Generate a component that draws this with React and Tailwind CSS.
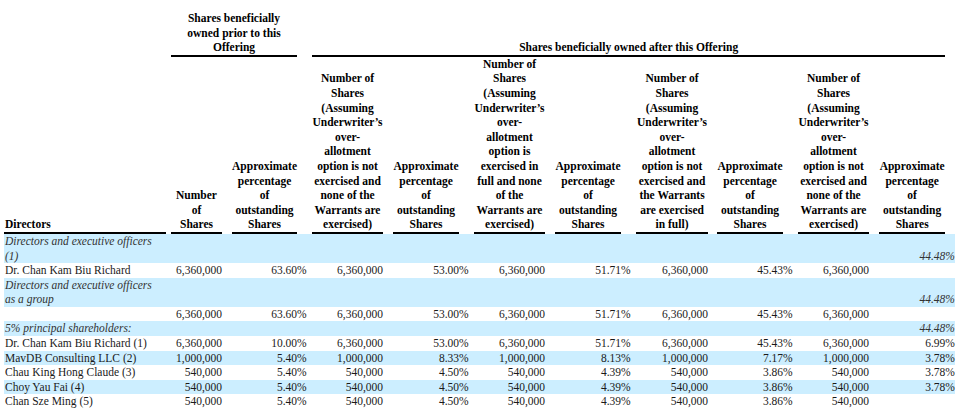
const shareCol = (a, b, c, d) => [
  "Number of",
  "Shares",
  "(Assuming",
  "Underwriter’s",
  "over-",
  "allotment",
  a,
  b,
  c,
  d,
];

const headers = [
  ["Number", "of", "Shares"],
  ["Approximate", "percentage", "of", "outstanding", "Shares"],
  [...shareCol("option is not", "exercised and", "none of the", "Warrants are"), "exercised)"],
  ["Approximate", "percentage", "of", "outstanding", "Shares"],
  [
    "Number of",
    "Shares",
    "(Assuming",
    "Underwriter’s",
    "over-",
    "allotment",
    "option is",
    "exercised in",
    "full and none",
    "of the",
    "Warrants are",
    "exercised)",
  ],
  ["Approximate", "percentage", "of", "outstanding", "Shares"],
  [...shareCol("option is not", "exercised and", "the Warrants", "are exercised"), "in full)"],
  ["Approximate", "percentage", "of", "outstanding", "Shares"],
  [...shareCol("option is not", "exercised and", "none of the", "Warrants are"), "exercised)"],
  ["Approximate", "percentage", "of", "outstanding", "Shares"],
];

const big = ["6,360,000", "63.60", "6,360,000", "53.00", "6,360,000", "51.71", "6,360,000", "45.43", "6,360,000", null];
const empty = [null, null, null, null, null, null, null, null, null, "44.48"];

const rows = [
  { name: ["Directors and executive officers", "(1)"], italic: true, blue: true, v: empty },
  { name: ["Dr. Chan Kam Biu Richard"], v: big },
  { name: ["Directors and executive officers", "as a group"], italic: true, blue: true, v: empty },
  { name: [""], v: big },
  { name: ["5% principal shareholders:"], italic: true, blue: true, v: empty },
  {
    name: ["Dr. Chan Kam Biu Richard (1)"],
    v: ["6,360,000", "10.00", "6,360,000", "53.00", "6,360,000", "51.71", "6,360,000", "45.43", "6,360,000", "6.99"],
  },
  {
    name: ["MavDB Consulting LLC (2)"],
    blue: true,
    v: ["1,000,000", "5.40", "1,000,000", "8.33", "1,000,000", "8.13", "1,000,000", "7.17", "1,000,000", "3.78"],
  },
  {
    name: ["Chau King Hong Claude (3)"],
    v: ["540,000", "5.40", "540,000", "4.50", "540,000", "4.39", "540,000", "3.86", "540,000", "3.78"],
  },
  {
    name: ["Choy Yau Fai (4)"],
    blue: true,
    v: ["540,000", "5.40", "540,000", "4.50", "540,000", "4.39", "540,000", "3.86", "540,000", "3.78"],
  },
  {
    name: ["Chan Sze Ming (5)"],
    v: ["540,000", "5.40", "540,000", "4.50", "540,000", "4.39", "540,000", "3.86", "540,000", null],
  },
];

const HeaderRow = () => {
  const cells = [
    <th key="dir" className="p-0 text-left align-bottom font-bold border-b-2 border-black pl-[1px]">
      Directors
    </th>,
    <th key="sp0" className="p-0" />,
  ];
  headers.forEach((lines, i) => {
    cells.push(
      <th key={`h${i}`} className="p-0 text-center align-bottom font-bold border-b-2 border-black">
        {lines.map((l, j) => (
          <div key={j} className="whitespace-nowrap">
            {l}
          </div>
        ))}
      </th>
    );
    if (i % 2 === 1) cells.push(<th key={`p${i}`} className="p-0" />);
    if (i < 9) cells.push(<th key={`s${i}`} className="p-0" />);
  });
  return <tr>{cells}</tr>;
};

const DataRow = ({ row }) => {
  const cells = [
    <td key="name" className="p-0 pl-[1px] align-bottom">
      {row.name.map((n, j) => (
        <div key={j} className="whitespace-nowrap">
          {n || "\u00a0"}
        </div>
      ))}
    </td>,
    <td key="sp0" className="p-0" />,
  ];
  row.v.forEach((val, i) => {
    cells.push(
      <td key={`v${i}`} className="p-0 text-right align-bottom whitespace-nowrap">
        {val}
      </td>
    );
    if (i % 2 === 1)
      cells.push(
        <td key={`p${i}`} className="p-0 text-left align-bottom whitespace-nowrap">
          {val ? "%" : null}
        </td>
      );
    if (i < 9) cells.push(<td key={`s${i}`} className="p-0" />);
  });
  return (
    <tr className={`${row.blue ? "bg-[#cceeff]" : "bg-white"} ${row.italic ? "italic text-[#333333]" : "text-[#1a1a1a]"}`}>
      {cells}
    </tr>
  );
};

export default function App() {
  return (
    <div className="min-h-screen bg-white pl-[4px] pt-[11px] font-['Liberation_Serif',serif] text-[11.5px] leading-[14.6px] text-black">
      <table className="table-fixed border-separate border-spacing-0 w-[951px]">
        <colgroup>
          <col className="w-[162px]" />
          <col className="w-[5px]" />
          <col className="w-[51px]" />
          <col className="w-[10px]" />
          <col className="w-[65px]" />
          <col className="w-[10px]" />
          <col className="w-[5px]" />
          <col className="w-[71px]" />
          <col className="w-[10px]" />
          <col className="w-[66px]" />
          <col className="w-[10px]" />
          <col className="w-[5px]" />
          <col className="w-[71px]" />
          <col className="w-[10px]" />
          <col className="w-[66px]" />
          <col className="w-[10px]" />
          <col className="w-[5px]" />
          <col className="w-[72px]" />
          <col className="w-[9px]" />
          <col className="w-[66px]" />
          <col className="w-[10px]" />
          <col className="w-[5px]" />
          <col className="w-[71px]" />
          <col className="w-[10px]" />
          <col className="w-[66px]" />
          <col className="w-[10px]" />
        </colgroup>
        <thead>
          <tr>
            <th colSpan={2} className="p-0" />
            <th colSpan={3} className="p-0 text-center align-bottom font-bold border-b-2 border-black">
              <div>Shares beneficially</div>
              <div>owned prior to this</div>
              <div>Offering</div>
            </th>
            <th colSpan={2} className="p-0" />
            <th colSpan={18} className="p-0 text-center align-bottom font-bold border-b-2 border-black">
              Shares beneficially owned after this Offering
            </th>
            <th className="p-0" />
          </tr>
          <HeaderRow />
        </thead>
        <tbody>
          {rows.map((row, i) => (
            <DataRow key={i} row={row} />
          ))}
        </tbody>
      </table>
    </div>
  );
}
